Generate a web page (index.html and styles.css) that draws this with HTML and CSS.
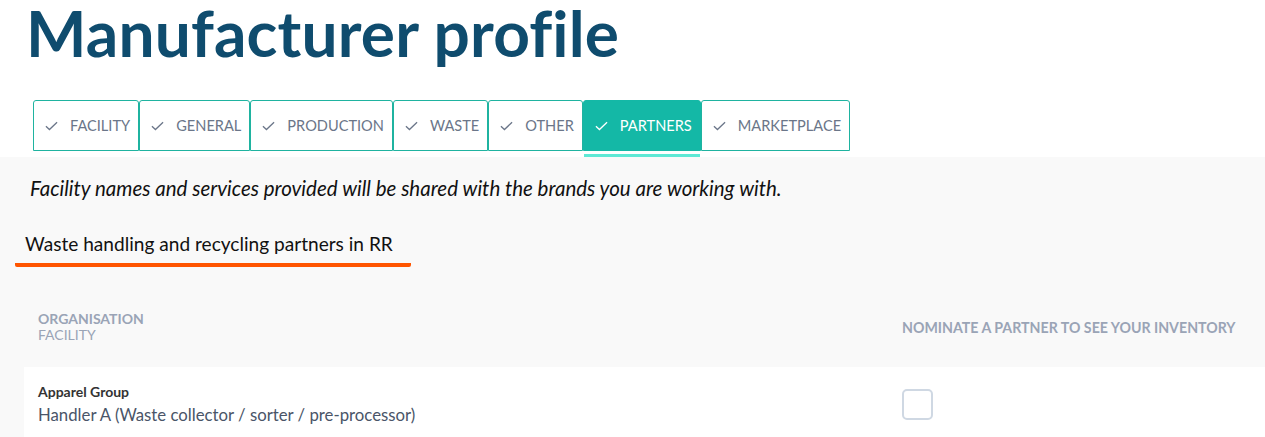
FILE: index.html
```html
<!DOCTYPE html>
<html lang="en">
<head>
<meta charset="utf-8">
<title>Manufacturer profile</title>
<link rel="stylesheet" href="styles.css">
</head>
<body>
<header class="top">
  <h1 class="title">Manufacturer profile</h1>
  <nav class="tabs">
    <a class="tab"><svg class="chk" viewBox="0 0 14 10"><path d="M1 5.2 L4.8 8.8 L13 1"/></svg><span>FACILITY</span></a>
    <a class="tab"><svg class="chk" viewBox="0 0 14 10"><path d="M1 5.2 L4.8 8.8 L13 1"/></svg><span>GENERAL</span></a>
    <a class="tab"><svg class="chk" viewBox="0 0 14 10"><path d="M1 5.2 L4.8 8.8 L13 1"/></svg><span>PRODUCTION</span></a>
    <a class="tab"><svg class="chk" viewBox="0 0 14 10"><path d="M1 5.2 L4.8 8.8 L13 1"/></svg><span>WASTE</span></a>
    <a class="tab"><svg class="chk" viewBox="0 0 14 10"><path d="M1 5.2 L4.8 8.8 L13 1"/></svg><span>OTHER</span></a>
    <a class="tab active"><svg class="chk" viewBox="0 0 14 10"><path d="M1 5.2 L4.8 8.8 L13 1"/></svg><span>PARTNERS</span></a>
    <a class="tab"><svg class="chk" viewBox="0 0 14 10"><path d="M1 5.2 L4.8 8.8 L13 1"/></svg><span>MARKETPLACE</span></a>
  </nav>
</header>
<main class="panel">
  <p class="note">Facility names and services provided will be shared with the brands you are working with.</p>
  <h2 class="section">Waste handling and recycling partners in RR</h2>
  <div class="table">
    <div class="thead">
      <div class="th-org"><strong>ORGANISATION</strong><span>FACILITY</span></div>
      <div class="th-nom">NOMINATE A PARTNER TO SEE YOUR INVENTORY</div>
    </div>
    <div class="row">
      <div class="cell-org"><strong>Apparel Group</strong><span>Handler A (Waste collector / sorter / pre-processor)</span></div>
      <div class="cell-nom"><span class="box"></span></div>
    </div>
  </div>
</main>
</body>
</html>
```

FILE: styles.css
```css
* { box-sizing: border-box; }
html, body { margin: 0; padding: 0; }
body {
  font-family: Lato, "Noto Sans", sans-serif;
  background: #f9f9f9;
  color: #111;
  overflow: hidden;
}
.top {
  background: #fff;
  padding: 0 0 6px 0;
}
.title {
  margin: 0;
  padding: 0 0 0 26px;
  height: 100px;
  font-size: 64px;
  font-weight: 700;
  color: #0f4c6e;
  line-height: 66px;
  letter-spacing: 0.15px;
}
.tabs {
  display: flex;
  padding-left: 33px;
}
.tab {
  position: relative;
  display: flex;
  align-items: center;
  height: 51px;
  padding: 0 8px 0 11px;
  border: 1px solid #1fb3a0;
  border-radius: 3px 3px 0 0;
  color: #6b7689;
  font-size: 14.6px;
  background: #fff;
}
.chk {
  width: 13px;
  height: 10px;
  margin-right: 12px;
  fill: none;
  stroke: #6b7689;
  stroke-width: 1.4;
}
.tab.active {
  background: #14b8a6;
  border-color: #14b8a6;
  color: #fff;
}
.tab.active .chk { stroke: #fff; }
.tab.active::after {
  content: "";
  position: absolute;
  left: 0;
  right: 0;
  bottom: -7px;
  height: 3px;
  background: #5ee9d5;
}
.panel {
  padding: 19px 0 0 0;
}
.note {
  margin: 0 0 0 30px;
  font-style: italic;
  font-size: 20.5px;
  line-height: 24px;
  color: #111;
}
.section {
  display: inline-block;
  margin: 33px 0 0 15px;
  padding: 0 18px 8px 10px;
  font-size: 19.1px;
  font-weight: 400;
  line-height: 22px;
  border-bottom: 4px solid #ff5500;
  border-radius: 0 0 2px 2px;
}
.table {
  margin: 20px 0 0 24px;
}
.thead {
  display: flex;
  align-items: center;
  height: 80px;
  color: #9aa4b6;
  font-size: 14px;
}
.th-org {
  display: flex;
  flex-direction: column;
  padding-left: 14px;
  width: 878px;
  line-height: 16px;
}
.th-org strong { font-weight: 700; }
.th-nom {
  font-weight: 700;
  font-size: 14.2px;
}
.row {
  display: flex;
  align-items: center;
  background: #fff;
  height: 74px;
}
.cell-org {
  display: flex;
  flex-direction: column;
  padding-left: 14px;
  width: 878px;
  gap: 4px;
}
.cell-org strong {
  font-size: 14px;
  color: #333;
}
.cell-org span {
  font-size: 16.75px;
  color: #4a5568;
}
.box {
  display: block;
  width: 31px;
  height: 31px;
  border: 2px solid #cfd8e3;
  border-radius: 5px;
}
```
